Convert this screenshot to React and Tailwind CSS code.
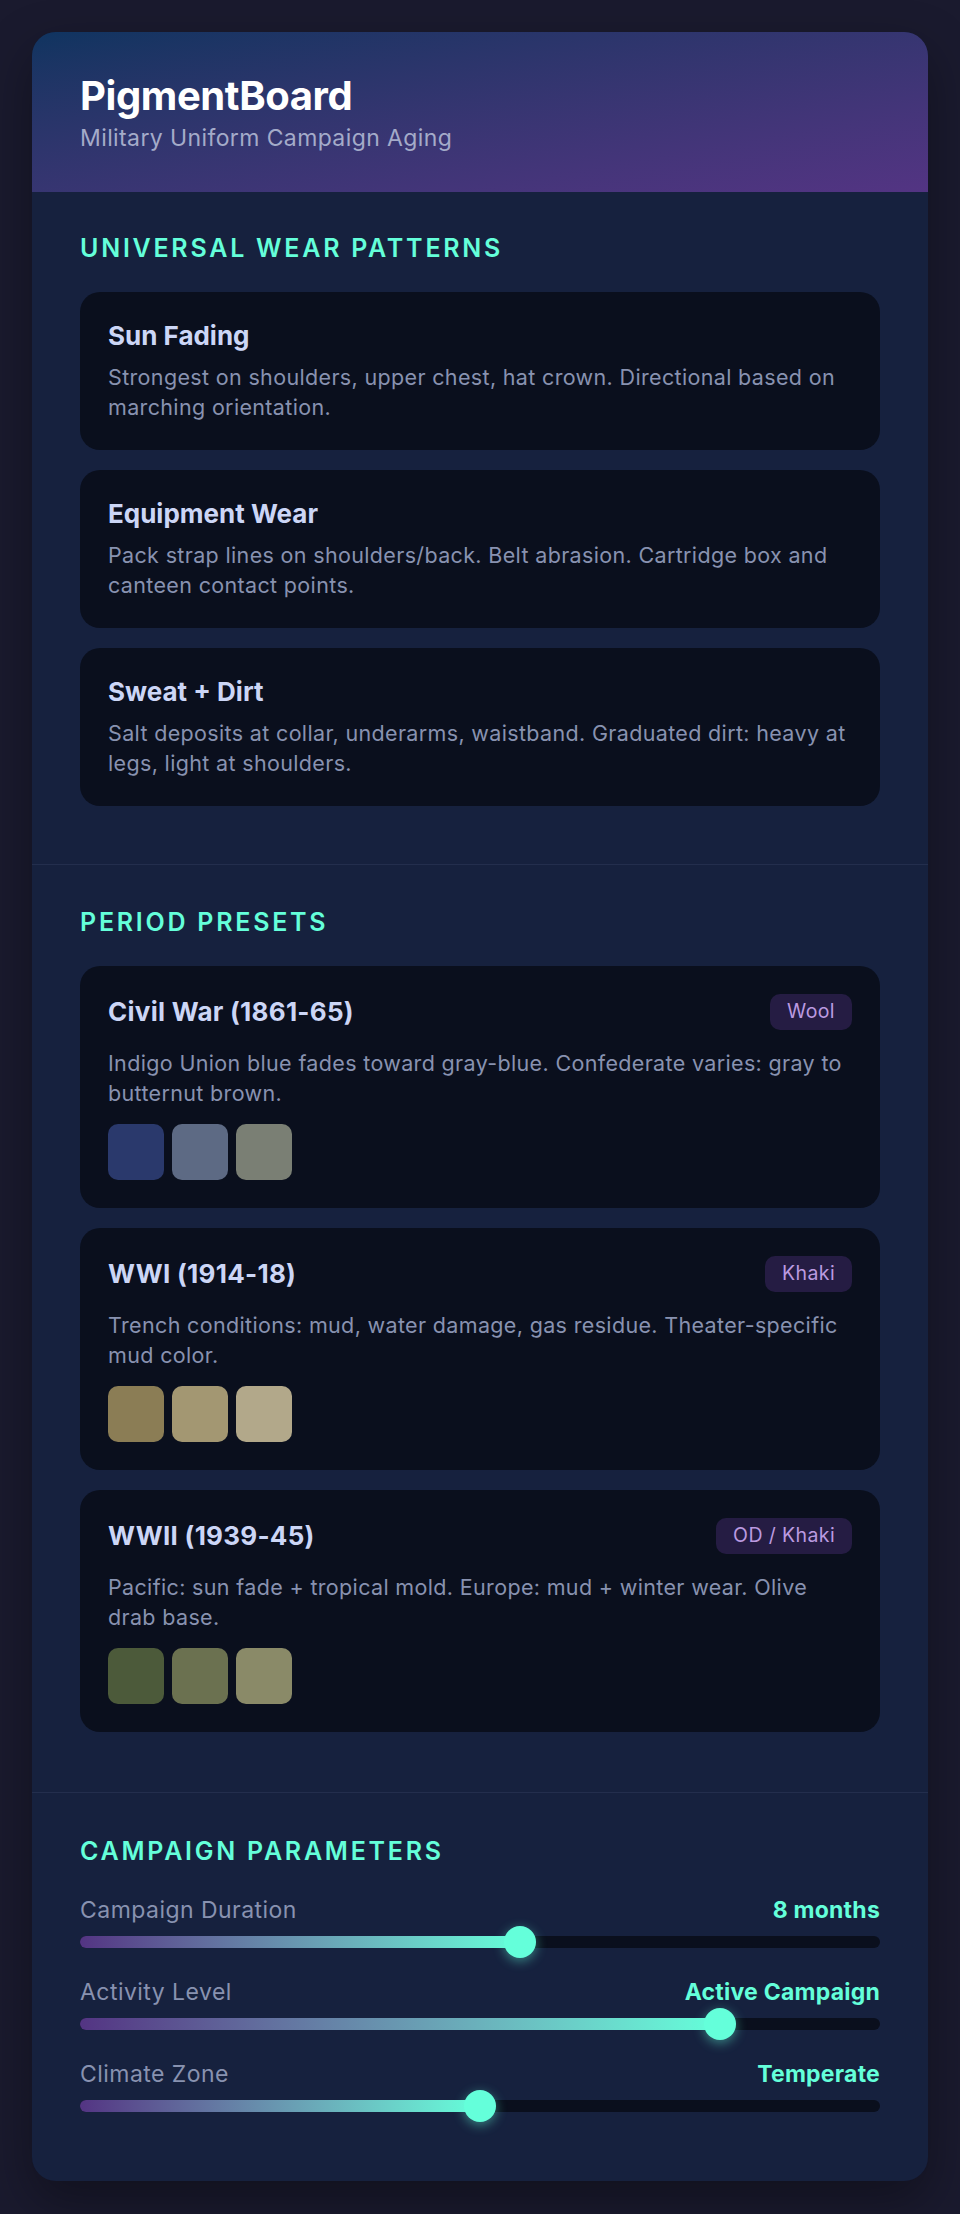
import React from "react";

const WEAR = [
  {
    title: "Sun Fading",
    text: "Strongest on shoulders, upper chest, hat crown. Directional based on marching orientation.",
  },
  {
    title: "Equipment Wear",
    text: "Pack strap lines on shoulders/back. Belt abrasion. Cartridge box and canteen contact points.",
  },
  {
    title: "Sweat + Dirt",
    text: "Salt deposits at collar, underarms, waistband. Graduated dirt: heavy at legs, light at shoulders.",
  },
];

const PRESETS = [
  {
    title: "Civil War (1861-65)",
    tag: "Wool",
    text: "Indigo Union blue fades toward gray-blue. Confederate varies: gray to butternut brown.",
    swatches: ["#2a396c", "#5d6a84", "#7a7f74"],
  },
  {
    title: "WWI (1914-18)",
    tag: "Khaki",
    text: "Trench conditions: mud, water damage, gas residue. Theater-specific mud color.",
    swatches: ["#8b7d55", "#a39772", "#b2a88a"],
  },
  {
    title: "WWII (1939-45)",
    tag: "OD / Khaki",
    text: "Pacific: sun fade + tropical mold. Europe: mud + winter wear. Olive drab base.",
    swatches: ["#4c5a3a", "#6b7150", "#8a8a68"],
  },
];

const PARAMS = [
  { label: "Campaign Duration", value: "8 months", pct: 55 },
  { label: "Activity Level", value: "Active Campaign", pct: 80 },
  { label: "Climate Zone", value: "Temperate", pct: 50 },
];

function SectionTitle({ children }) {
  return (
    <h2 className="mb-7 text-[25px] leading-[32px] font-semibold uppercase tracking-[0.11em] text-[#64ffda]">
      {children}
    </h2>
  );
}

function Slider({ label, value, pct }) {
  return (
    <div>
      <div className="mb-[11px] flex items-center justify-between leading-[30px]">
        <span className="text-[23px] tracking-[0.02em] text-[#8892b0]">{label}</span>
        <span className="text-[23px] font-bold tracking-[0.01em] text-[#64ffda]">{value}</span>
      </div>
      <div className="relative h-3 rounded-full bg-[#0a0f1d]">
        <div
          className="h-3 rounded-full bg-linear-to-r from-[#533483] to-[#64ffda]"
          style={{ width: `${pct}%` }}
        />
        <div
          className="absolute top-1/2 h-[32px] w-[32px] -translate-x-1/2 -translate-y-1/2 rounded-full bg-[#64ffda] shadow-[0_3px_12px_rgba(100,255,218,0.45)]"
          style={{ left: `${pct}%` }}
        />
      </div>
    </div>
  );
}

export default function App() {
  return (
    <div className="min-h-screen bg-[#1a1a2e] p-8 font-['Inter','Noto_Sans',sans-serif]">
      <div className="overflow-hidden rounded-3xl bg-[#16213e] shadow-[0_20px_50px_rgba(0,0,0,0.35)]">
        <header className="bg-linear-to-br from-[#0f3460] to-[#533483] px-12 pt-10 pb-[39px]">
          <h1 className="text-[40px] leading-[48px] font-bold tracking-[-0.01em] text-white">
            PigmentBoard
          </h1>
          <p className="mt-[3px] text-[23px] leading-[30px] tracking-[0.017em] text-[#a4abc9]">
            Military Uniform Campaign Aging
          </p>
        </header>

        <section className="px-12 pt-10 pb-[58px]">
          <SectionTitle>Universal Wear Patterns</SectionTitle>
          <div className="flex flex-col gap-5">
            {WEAR.map((w) => (
              <div key={w.title} className="rounded-[20px] bg-[#0a0f1d] p-7">
                <h3 className="mb-[10px] text-[26px] leading-[32px] font-bold text-[#ccd6f6]">
                  {w.title}
                </h3>
                <p className="text-[21.5px] leading-[30px] tracking-[0.016em] text-[#8892b0]">
                  {w.text}
                </p>
              </div>
            ))}
          </div>
        </section>

        <section className="border-t border-[#232e4d] px-12 pt-[41px] pb-[60px]">
          <SectionTitle>Period Presets</SectionTitle>
          <div className="flex flex-col gap-5">
            {PRESETS.map((p) => (
              <div key={p.title} className="rounded-[20px] bg-[#0a0f1d] p-7">
                <div className="mb-[18px] flex h-9 items-center justify-between">
                  <h3 className="text-[26px] leading-[32px] font-bold tracking-[0.01em] text-[#ccd6f6]">
                    {p.title}
                  </h3>
                  <span className="flex h-9 items-center rounded-[10px] bg-[#251c43] px-[17px] text-[19.5px] tracking-[0.02em] text-[#bb9ae0]">
                    {p.tag}
                  </span>
                </div>
                <p className="text-[21.5px] leading-[30px] tracking-[0.016em] text-[#8892b0]">
                  {p.text}
                </p>
                <div className="mt-4 flex gap-2">
                  {p.swatches.map((c) => (
                    <div
                      key={c}
                      className="h-14 w-14 rounded-[10px]"
                      style={{ backgroundColor: c }}
                    />
                  ))}
                </div>
              </div>
            ))}
          </div>
        </section>

        <section className="border-t border-[#232e4d] px-12 pt-[42px] pb-[69px]">
          <SectionTitle>Campaign Parameters</SectionTitle>
          <div className="flex flex-col gap-[29px]">
            {PARAMS.map((s) => (
              <Slider key={s.label} {...s} />
            ))}
          </div>
        </section>
      </div>
    </div>
  );
}
